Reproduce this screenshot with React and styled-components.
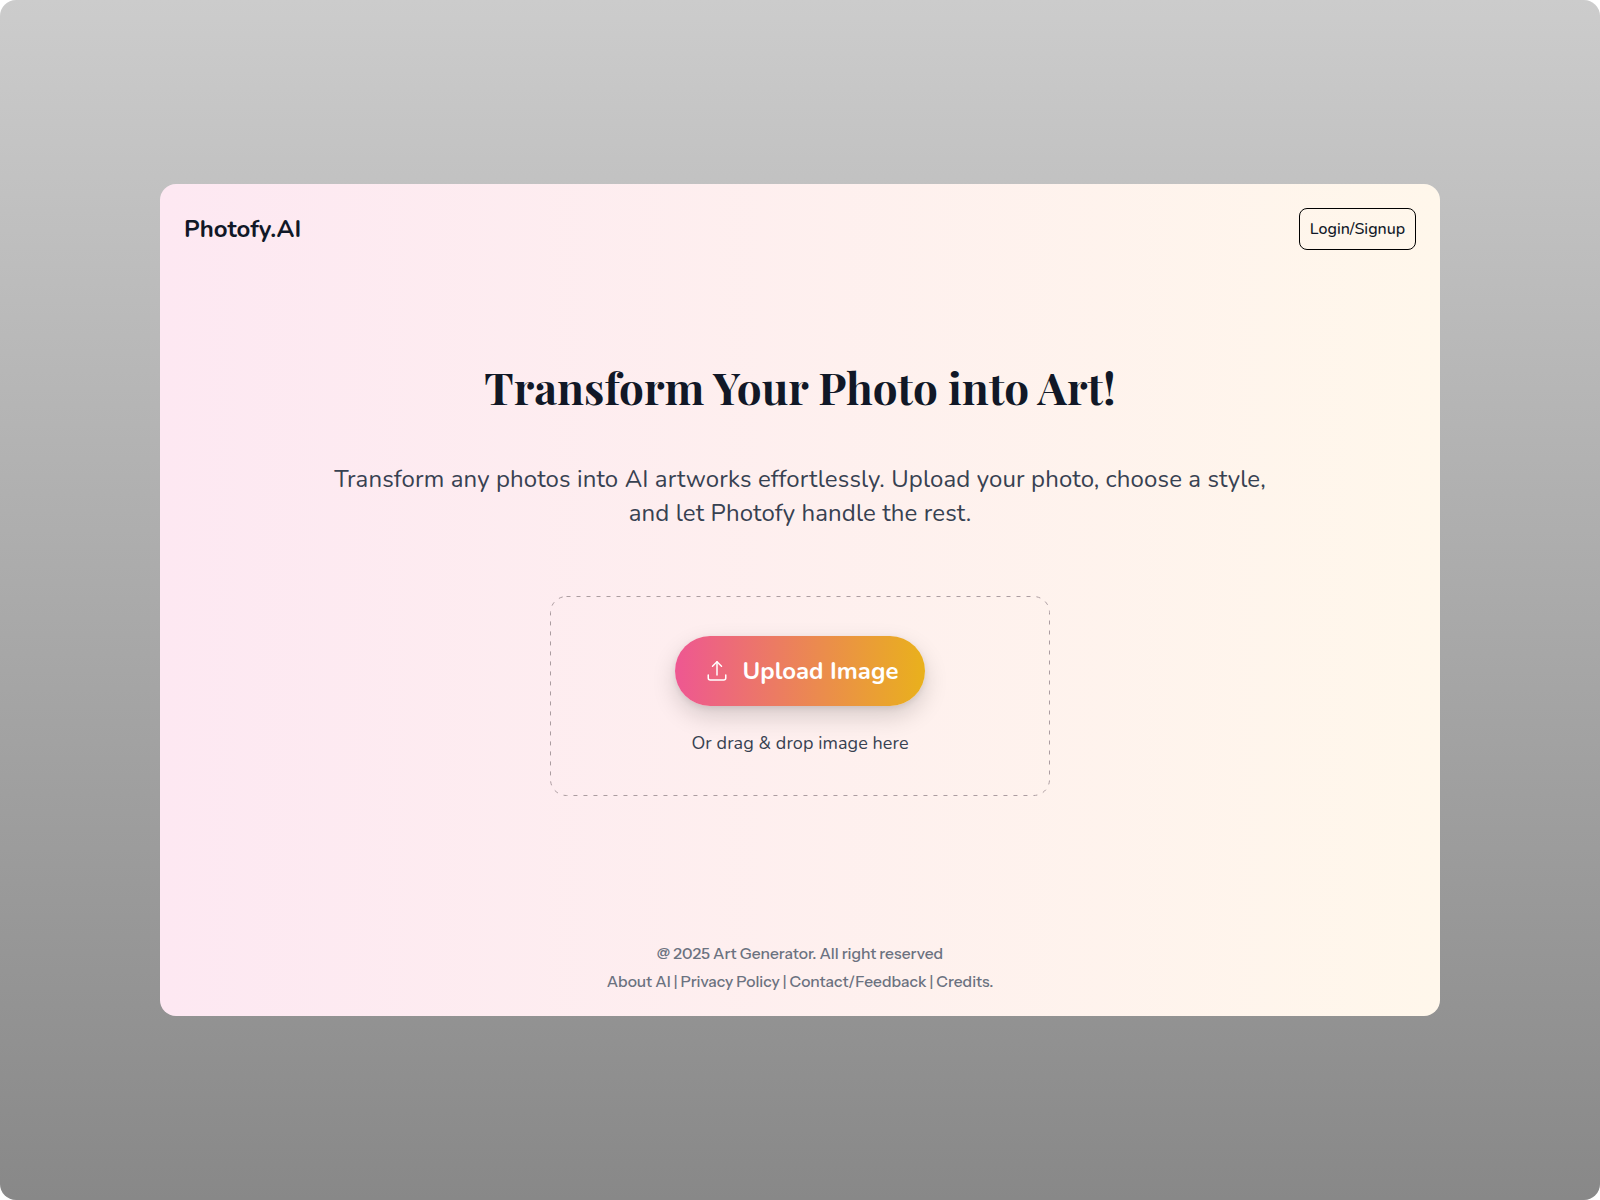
import React from "react";
import styled, { createGlobalStyle } from "styled-components";

const GlobalStyle = createGlobalStyle`
  html, body {
    margin: 0;
    padding: 0;
    background: #ffffff;
  }
  * {
    box-sizing: border-box;
  }
`;

const Page = styled.div`
  width: 1600px;
  height: 1200px;
  border-radius: 16px;
  background: linear-gradient(180deg, #cccccc 0%, #888888 100%);
  display: flex;
  align-items: center;
  justify-content: center;
`;

const Card = styled.div`
  width: 1280px;
  height: 832px;
  border-radius: 16px;
  padding: 24px 24px 20px;
  background: linear-gradient(90deg, #fde8f2 0%, #fff7eb 100%);
  display: flex;
  flex-direction: column;
  font-family: "Nunito", "Noto Sans", sans-serif;
`;

const Header = styled.header`
  display: flex;
  align-items: center;
  justify-content: space-between;
`;

const Logo = styled.div`
  font-size: 24px;
  font-weight: 700;
  color: #111827;
`;

const LoginButton = styled.button`
  width: 117px;
  height: 42px;
  border: 1px solid #000000;
  border-radius: 8px;
  background: transparent;
  font-family: inherit;
  font-size: 16px;
  font-weight: 500;
  color: #111827;
`;

const Main = styled.main`
  flex: 1;
  display: flex;
  flex-direction: column;
  align-items: center;
  padding-top: 101px;
`;

const Title = styled.h1`
  margin: 0;
  font-family: "Playfair Display", "Liberation Serif", serif;
  font-size: 44px;
  line-height: 72px;
  font-weight: 700;
  color: #111827;
`;

const Subtitle = styled.p`
  margin: 40px 0 0;
  width: 960px;
  text-align: center;
  font-size: 24px;
  line-height: 33.6px;
  letter-spacing: 0.12px;
  color: #374151;
`;

const DropZone = styled.div`
  position: relative;
  margin-top: 66px;
  width: 500px;
  height: 200px;
  display: flex;
  flex-direction: column;
  align-items: center;
  padding-top: 40px;
`;

const DashedOutline = styled.svg`
  position: absolute;
  inset: 0;
  width: 100%;
  height: 100%;
  pointer-events: none;
`;

const UploadButton = styled.button`
  width: 250px;
  height: 70px;
  border: none;
  border-radius: 35px;
  padding: 0 0 0 3px;
  background: linear-gradient(90deg, #ee5792 0%, #e9b11c 100%);
  box-shadow: 0 10px 24px rgba(0, 0, 0, 0.16), 0 2px 6px rgba(0, 0, 0, 0.08);
  color: #ffffff;
  font-family: inherit;
  font-size: 24px;
  font-weight: 700;
  display: flex;
  align-items: center;
  justify-content: center;
  gap: 14px;
`;

const DropHint = styled.p`
  margin: 25px 0 0;
  font-size: 18px;
  line-height: 24px;
  letter-spacing: 0.08px;
  color: #374151;
`;

const Footer = styled.footer`
  text-align: center;
  font-family: "Instrument Sans", "Inter", sans-serif;
  font-size: 15.6px;
  line-height: 28px;
  font-weight: 500;
  color: #6b7280;
`;

const UploadIcon = () => (
  <svg width="24" height="24" viewBox="0 0 24 24" fill="none" stroke="currentColor" strokeWidth="1.5" strokeLinecap="round" strokeLinejoin="round">
    <path d="M12 16V2.75" />
    <path d="M7.5 7.25L12 2.75L16.5 7.25" />
    <path d="M3.25 16v3a2 2 0 0 0 2 2h13.5a2 2 0 0 0 2-2v-3" />
  </svg>
);

export default function App() {
  return (
    <>
      <GlobalStyle />
      <Page>
        <Card>
          <Header>
            <Logo>Photofy.AI</Logo>
            <LoginButton>Login/Signup</LoginButton>
          </Header>
          <Main>
            <Title>Transform Your Photo into Art!</Title>
            <Subtitle>
              Transform any photos into AI artworks effortlessly. Upload your photo, choose a style, and let Photofy handle the rest.
            </Subtitle>
            <DropZone>
              <DashedOutline viewBox="0 0 500 200">
                <rect x="0.5" y="0.5" width="499" height="199" rx="16" fill="none" stroke="#ab9ca0" strokeWidth="1" strokeDasharray="4 6" />
              </DashedOutline>
              <UploadButton>
                <UploadIcon />
                Upload Image
              </UploadButton>
              <DropHint>Or drag &amp; drop image here</DropHint>
            </DropZone>
          </Main>
          <Footer>
            <div>@ 2025 Art Generator. All right reserved</div>
            <div>About AI | Privacy Policy | Contact/Feedback | Credits.</div>
          </Footer>
        </Card>
      </Page>
    </>
  );
}
